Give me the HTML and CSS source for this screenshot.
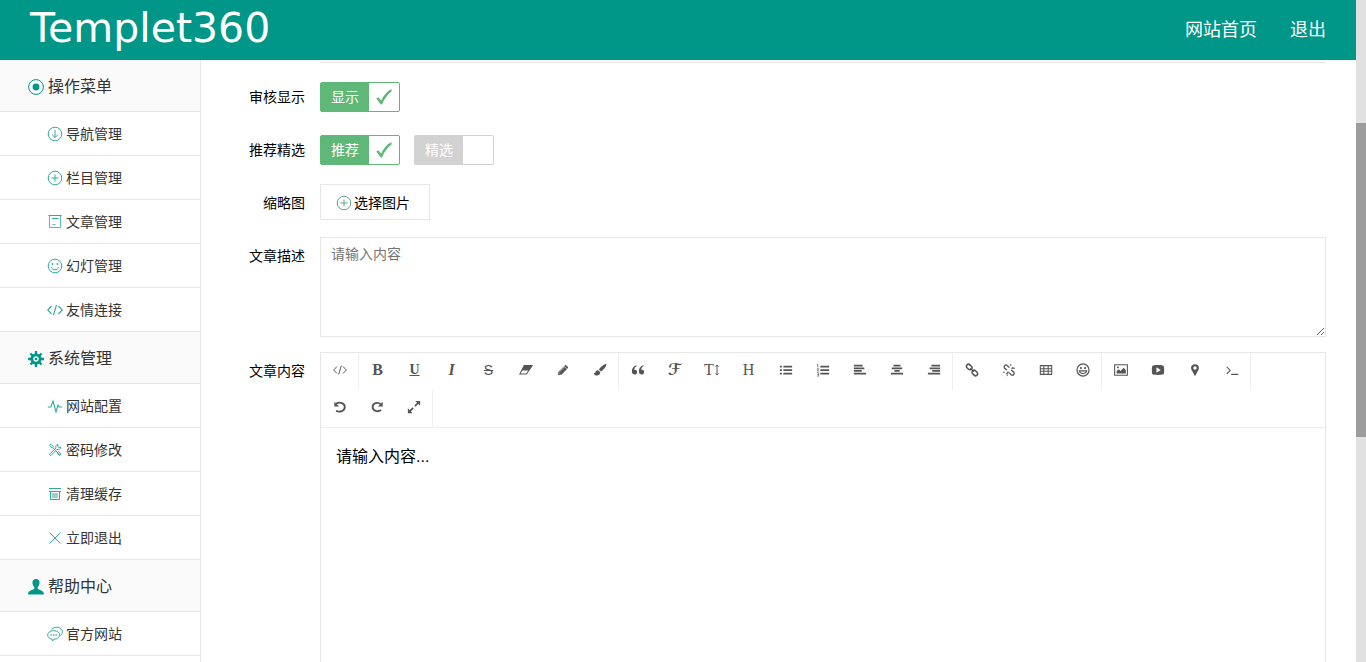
FILE: index.html
```html
<!DOCTYPE html>
<html lang="zh-CN">
<head>
<meta charset="utf-8">
<title>Templet360</title>
<link rel="stylesheet" href="styles.css">
</head>
<body>
<svg class="sprite" aria-hidden="true">
  <symbol id="i-target" viewBox="0 0 16 16"><circle cx="8" cy="8" r="7.4" fill="none" stroke="currentColor"/><circle cx="8" cy="8" r="3.4" fill="currentColor"/></symbol>
  <symbol id="i-down" viewBox="0 0 16 16"><g fill="none" stroke="currentColor"><circle cx="8" cy="8" r="6.8"/><path d="M8 4v7.5M5.2 8.8 8 11.6l2.8-2.8"/></g></symbol>
  <symbol id="i-plus" viewBox="0 0 16 16"><g fill="none" stroke="currentColor"><circle cx="8" cy="8" r="6.8"/><path d="M8 4.5v7M4.5 8h7"/></g></symbol>
  <symbol id="i-doc" viewBox="0 0 16 16"><g fill="none" stroke="currentColor"><path d="M2.500 2v11.500h11V2M5.500 10.500h3" stroke-width=".8"/><path d="M1.500 1.500h13M5 4.500h6.500" stroke-width="1.200"/></g></symbol>
  <symbol id="i-smile" viewBox="0 0 16 16"><g fill="none" stroke="currentColor"><circle cx="8" cy="8" r="6.8"/><path d="M4.300 9.200c1 3.400 6.400 3.400 7.400 0"/></g><circle cx="5.500" cy="6" r=".9" fill="currentColor"/><circle cx="10.500" cy="6" r=".9" fill="currentColor"/></symbol>
  <symbol id="i-code" viewBox="0 0 16 16"><path d="M4.500 4 .7 8l3.800 4M11.500 4l3.800 4-3.800 4M9.500 3l-3 10" fill="none" stroke="currentColor" stroke-width="1.100"/></symbol>
  <symbol id="i-gear" viewBox="0 0 16 16"><path d="M8 0v16M0 8h16M2.500 2.500l11 11M13.500 2.500l-11 11" stroke="currentColor" stroke-width="2.400"/><circle cx="8" cy="8" r="4" fill="none" stroke="currentColor" stroke-width="3"/><circle cx="8" cy="8" r="2.700" fill="#fafafa"/><circle cx="8" cy="8" r="1.300" fill="currentColor"/></symbol>
  <symbol id="i-pulse" viewBox="0 0 16 16"><path d="M.8 9h3L6 3l3 11 2-7 1.200 2h3" fill="none" stroke="currentColor" stroke-width="1.100"/></symbol>
  <symbol id="i-tools" viewBox="0 0 16 16"><g fill="none" stroke="currentColor"><path d="m2.500 3.200 1.400-1 2.600 2.600-1.200 1.400zM6.200 6l6.700 7.200M11 2.500c-2 .2-2.700 2-2 3.500L2.300 12.300l1.500 1.400L10 7.300c2 .8 3.800-.5 3.700-2.300l-2 .5-.8-.8zM10 11l1.500-1.700 2.400 2.600-1.500 1.700z"/></g></symbol>
  <symbol id="i-trash" viewBox="0 0 16 16"><path d="M2 2.500h12M2 5.500h12M3.500 6v7.500h9V6M6 7v5M8 7v5M10 7v5" fill="none" stroke="currentColor"/></symbol>
  <symbol id="i-close" viewBox="0 0 16 16"><path d="m2.500 2.500 11 11M13.500 2.500l-11 11" fill="none" stroke="currentColor"/></symbol>
  <symbol id="i-user" viewBox="0 0 16 16"><path d="M8 0C5.500 0 4.200 1.900 4.500 4.300c.2 2 1 3 1.800 3.900v1.600C5.500 11 0 11.200 0 15.500h16c0-4.300-5.500-4.500-6.300-5.700V8.200c.8-.9 1.600-1.900 1.800-3.900C11.800 1.900 10.500 0 8 0z" fill="currentColor"/></symbol>
  <symbol id="i-chat" viewBox="0 0 16 16"><g fill="none" stroke="currentColor"><path d="M5 13.200c-6-1-6-8.200 1.500-8.500 8.300.2 8 8.300.2 8.500L5.800 15z"/><path d="M4.500 3.500c2.700-4 11.800-2.500 10.800 3-.2 1.500-1 2.500-2 3"/></g><path d="M3.500 9h1.300M6 9h1.300M8.500 9h1.300" stroke="currentColor" stroke-width="1.300"/></symbol>
  <symbol id="i-check" viewBox="0 0 16 16"><path d="m.3 9.500 1.900-1.300 3 3.300C7.700 6.300 10.800 2.500 15.500 0v2.500c-4 3-7 7-9.500 13H4.800z" fill="currentColor"/></symbol>
  <symbol id="i-eraser" viewBox="0 0 16 16"><path d="M6 3h9l-6.500 9.500H1z" fill="none" stroke="currentColor" stroke-width="1.200"/><path d="M6 3h9l-3.700 5.600H2.800z" fill="currentColor"/></symbol>
  <symbol id="i-pencil" viewBox="0 0 16 16"><path d="m2 14 .8-4L10 2.800c.6-.6 1.200-.6 1.800 0l1.700 1.600c.5.500.5 1.200 0 1.700L6.200 13.300z" fill="currentColor"/><path d="m4 10 6-6M3.200 11.500l1.500 1.500M9.300 3.800l3.200 3.100" stroke="#fff" stroke-width=".7"/></symbol>
  <symbol id="i-brush" viewBox="0 0 16 16"><path d="M15 1.200c-1.200-1.200-7.200 4.100-8.300 6.300L9 9.700c2.500-1.200 7.500-7.200 6-8.500zM6 8.300c-2-.2-3 .8-3.200 2.300-.1 1-.8 1-1.800.7.300 4.200 7 4.200 7.300-.6z" fill="currentColor"/></symbol>
  <symbol id="i-quote" viewBox="0 0 16 16"><path d="M6.500 3.500 6 2.600C2.500 4 1 6.200 1 9.500c0 5 6 4.400 6 1 0-2-1.500-3-3.300-2.600.2-2 1-3.400 2.800-4.400zM14.500 3.500l-.5-.9C10.500 4 9 6.200 9 9.500c0 5 6 4.400 6 1 0-2-1.500-3-3.300-2.600.2-2 1-3.400 2.800-4.400z" fill="currentColor"/></symbol>
  <symbol id="i-size" viewBox="0 0 4 14"><path d="M2 2v10M.5 3.500 2 2l1.500 1.500M.5 10.500 2 12l1.500-1.500" stroke="currentColor" fill="none"/></symbol>
  <symbol id="i-ul" viewBox="0 0 16 16"><path d="M1 4h2.300M1 8h2.300M1 12h2.300M5 4h10M5 8h10M5 12h10" stroke="currentColor" stroke-width="2"/></symbol>
  <symbol id="i-ol" viewBox="0 0 16 16"><path d="M5 4h10M5 8h10M5 12h10" stroke="currentColor" stroke-width="2"/><path d="M1 2l1-.5V5M1 6.500h2L1.200 9H3.500M1 11h2v4H1M1.500 13H3" fill="none" stroke="currentColor" stroke-width=".8"/></symbol>
  <symbol id="i-left" viewBox="0 0 16 16"><path d="M1 3h10M1 6h12M1 9h9M1 12h14" stroke="currentColor" stroke-width="2"/></symbol>
  <symbol id="i-center" viewBox="0 0 16 16"><path d="M4 3h8M2 6h12M5 9h6M1 12h14" stroke="currentColor" stroke-width="2"/></symbol>
  <symbol id="i-right" viewBox="0 0 16 16"><path d="M5 3h10M3 6h12M6 9h9M1 12h14" stroke="currentColor" stroke-width="2"/></symbol>
  <symbol id="i-link" viewBox="0 0 16 16"><g fill="none" stroke="currentColor" stroke-width="1.700"><rect x="1.300" y="2.300" width="7" height="4.600" rx="2.300" transform="rotate(45 4.800 4.600)"/><rect x="7.700" y="9.100" width="7" height="4.600" rx="2.300" transform="rotate(45 11.200 11.400)"/><path d="m6 6 4 4"/></g></symbol>
  <symbol id="i-unlink" viewBox="0 0 16 16"><g fill="none" stroke="currentColor" stroke-width="1.500"><path d="M5.500 8 2.800 5.800C1.500 3.500 4 1.200 6 2.800l2.500 2.500M10.500 8l3 2.500c1.500 2.200-1 4.500-3 3L8 11"/><path d="M7.500 10 5 12.500M11 6.500 13 5"/><path d="M10 1v2.500M15 6h-2.500M1 10.500h2.500M6 15v-2" stroke-width="1"/></g></symbol>
  <symbol id="i-table" viewBox="0 0 16 16"><path d="M1.500 3h13v10h-13zM1.500 6.500h13M1.500 9.500h13M5.500 3v10M10.500 3v10" fill="none" stroke="currentColor" stroke-width="1.200"/></symbol>
  <symbol id="i-face" viewBox="0 0 16 16"><circle cx="8" cy="8" r="6.900" fill="none" stroke="currentColor" stroke-width="1.400"/><circle cx="5.700" cy="5.800" r="1.200" fill="currentColor"/><circle cx="10.300" cy="5.800" r="1.200" fill="currentColor"/><path d="M3.800 9h8.400c-.8 4-7.600 4-8.400 0z" fill="none" stroke="currentColor" stroke-width="1.200"/></symbol>
  <symbol id="i-image" viewBox="0 0 16 16"><path d="M.7 2h14.600v12H.7z" fill="none" stroke="currentColor" stroke-width="1.200"/><path d="M3 12V9l2.500-2 2 2L11 5.500 13.500 8v4z" fill="currentColor"/><circle cx="4.500" cy="5" r="1.100" fill="currentColor"/></symbol>
  <symbol id="i-video" viewBox="0 0 16 16"><path d="M2.500 2.800c3.500-.5 7.500-.5 11 0 1.300.3 1.500 1.500 1.500 5.200s-.2 4.900-1.500 5.200c-3.500.5-7.500.5-11 0C1.200 12.900 1 11.700 1 8s.2-4.900 1.500-5.200z" fill="currentColor"/><path d="m6.200 4.800 5 3.200-5 3.200z" fill="#fff"/></symbol>
  <symbol id="i-pin" viewBox="0 0 16 16"><path d="M8 1.500c-5 0-5.500 5-3 8L8 15l3-5.500c2.500-3 2-8-3-8z" fill="currentColor"/><circle cx="8" cy="5.700" r="1.900" fill="#fff"/></symbol>
  <symbol id="i-term" viewBox="0 0 16 16"><path d="m2 4.500 4 4-4 4M7 13h8" fill="none" stroke="currentColor" stroke-width="1.200"/></symbol>
  <symbol id="i-undo" viewBox="0 0 16 16"><path d="M3 4.500C8 1.500 13.500 3.500 13.500 8s-5.500 6.500-10 4.500" fill="none" stroke="currentColor" stroke-width="2.100"/><path d="M1.500 2v5.500H7z" fill="currentColor"/></symbol>
  <symbol id="i-redo" viewBox="0 0 16 16"><path d="M12.500 5C9 1.800 3 3.500 3 8s6 6.300 9.700 3.500" fill="none" stroke="currentColor" stroke-width="2.100"/><path d="M14.500 2v5.500H9z" fill="currentColor"/></symbol>
  <symbol id="i-full" viewBox="0 0 16 16"><path d="m9 7 4-4M7 9l-4 4" stroke="currentColor" stroke-width="1.800"/><path d="M9.500 1H15v5.500zM1 9.500V15h5.500z" fill="currentColor"/></symbol>
</svg>

<div class="app">
  <header class="header">
    <a class="logo" href="#">Templet360</a>
    <nav class="top-nav"><a href="#">网站首页</a><a href="#">退出</a></nav>
  </header>
  <div class="body">
    <aside class="sidebar">
      <h2 class="side-title"><svg class="icon"><use href="#i-target"/></svg>操作菜单</h2>
      <a class="side-item" href="#"><svg class="icon"><use href="#i-down"/></svg>导航管理</a>
      <a class="side-item" href="#"><svg class="icon"><use href="#i-plus"/></svg>栏目管理</a>
      <a class="side-item" href="#"><svg class="icon"><use href="#i-doc"/></svg>文章管理</a>
      <a class="side-item" href="#"><svg class="icon"><use href="#i-smile"/></svg>幻灯管理</a>
      <a class="side-item" href="#"><svg class="icon"><use href="#i-code"/></svg>友情连接</a>
      <h2 class="side-title"><svg class="icon"><use href="#i-gear"/></svg>系统管理</h2>
      <a class="side-item" href="#"><svg class="icon"><use href="#i-pulse"/></svg>网站配置</a>
      <a class="side-item" href="#"><svg class="icon"><use href="#i-tools"/></svg>密码修改</a>
      <a class="side-item" href="#"><svg class="icon"><use href="#i-trash"/></svg>清理缓存</a>
      <a class="side-item" href="#"><svg class="icon"><use href="#i-close"/></svg>立即退出</a>
      <h2 class="side-title"><svg class="icon"><use href="#i-user"/></svg>帮助中心</h2>
      <a class="side-item" href="#"><svg class="icon"><use href="#i-chat"/></svg>官方网站</a>
    </aside>
    <main class="content">
      <form class="form">
        <div class="field-end"></div>
        <div class="row">
          <span class="label">审核显示</span>
          <div class="field">
            <label class="switch"><input type="checkbox" checked><span class="switch-text">显示</span><span class="switch-box"><svg class="icon"><use href="#i-check"/></svg></span></label>
          </div>
        </div>
        <div class="row">
          <span class="label">推荐精选</span>
          <div class="field">
            <label class="switch"><input type="checkbox" checked><span class="switch-text">推荐</span><span class="switch-box"><svg class="icon"><use href="#i-check"/></svg></span></label>
            <label class="switch"><input type="checkbox"><span class="switch-text">精选</span><span class="switch-box"><svg class="icon"><use href="#i-check"/></svg></span></label>
          </div>
        </div>
        <div class="row">
          <span class="label">缩略图</span>
          <div class="field"><button class="upload" type="button"><svg class="icon"><use href="#i-plus"/></svg>选择图片</button></div>
        </div>
        <div class="row">
          <label class="label" for="desc">文章描述</label>
          <textarea class="textarea" id="desc" placeholder="请输入内容"></textarea>
        </div>
        <div class="row">
          <span class="label" id="content-label">文章内容</span>
          <div class="editor">
            <div class="toolbar">
              <div class="group">
                <button type="button" aria-label="源码"><svg class="icon"><use href="#i-code"/></svg></button>
              </div>
              <div class="group">
                <button type="button"><b>B</b></button>
                <button type="button"><u>U</u></button>
                <button type="button"><i>I</i></button>
                <button type="button"><s>S</s></button>
                <button type="button" aria-label="清除"><svg class="icon"><use href="#i-eraser"/></svg></button>
                <button type="button" aria-label="颜色"><svg class="icon"><use href="#i-pencil"/></svg></button>
                <button type="button" aria-label="背景"><svg class="icon"><use href="#i-brush"/></svg></button>
              </div>
              <div class="group">
                <button type="button" aria-label="引用"><svg class="icon"><use href="#i-quote"/></svg></button>
                <button type="button" class="script">ℱ</button>
                <button type="button">T<svg class="icon-size"><use href="#i-size"/></svg></button>
                <button type="button">H</button>
                <button type="button" aria-label="无序列表"><svg class="icon"><use href="#i-ul"/></svg></button>
                <button type="button" aria-label="有序列表"><svg class="icon"><use href="#i-ol"/></svg></button>
                <button type="button" aria-label="左对齐"><svg class="icon"><use href="#i-left"/></svg></button>
                <button type="button" aria-label="居中"><svg class="icon"><use href="#i-center"/></svg></button>
                <button type="button" aria-label="右对齐"><svg class="icon"><use href="#i-right"/></svg></button>
              </div>
              <div class="group">
                <button type="button" aria-label="链接"><svg class="icon"><use href="#i-link"/></svg></button>
                <button type="button" aria-label="取消链接"><svg class="icon"><use href="#i-unlink"/></svg></button>
                <button type="button" aria-label="表格"><svg class="icon"><use href="#i-table"/></svg></button>
                <button type="button" aria-label="表情"><svg class="icon"><use href="#i-face"/></svg></button>
              </div>
              <div class="group">
                <button type="button" aria-label="图片"><svg class="icon"><use href="#i-image"/></svg></button>
                <button type="button" aria-label="视频"><svg class="icon"><use href="#i-video"/></svg></button>
                <button type="button" aria-label="位置"><svg class="icon"><use href="#i-pin"/></svg></button>
                <button type="button" aria-label="代码"><svg class="icon"><use href="#i-term"/></svg></button>
              </div>
              <div class="group">
                <button type="button" aria-label="撤销"><svg class="icon"><use href="#i-undo"/></svg></button>
                <button type="button" aria-label="重做"><svg class="icon"><use href="#i-redo"/></svg></button>
                <button type="button" aria-label="全屏"><svg class="icon"><use href="#i-full"/></svg></button>
              </div>
            </div>
            <div class="editable" contenteditable="true" role="textbox" aria-labelledby="content-label">请输入内容...</div>
          </div>
        </div>
      </form>
    </main>
  </div>
</div>
<div class="scrollbar"><div class="thumb"></div></div>
</body>
</html>
```
FILE: styles.css
```css
* { box-sizing: border-box; }
body {
  margin: 0;
  height: 100vh;
  overflow: hidden;
  display: grid;
  grid-template-columns: minmax(0, 1fr) 10px;
  background: #fff;
  color: #000;
  font: 14px/20px "Liberation Sans", "Noto Sans CJK SC", sans-serif;
}
a { color: inherit; text-decoration: none; }
button, textarea { font: inherit; color: inherit; }
.sprite { display: none; }
.icon { width: 16px; height: 16px; flex: none; }

.app { display: flex; flex-direction: column; height: 100vh; }
.header {
  flex: none;
  height: 60px;
  padding: 0 30px;
  display: flex;
  align-items: center;
  justify-content: space-between;
  background: #009688;
  color: #fff;
}
.logo { font: 41px/56px "DejaVu Sans", sans-serif; height: 60px; }
.top-nav { display: flex; gap: 33px; font-size: 18px; }

.body { flex: 1; min-height: 0; display: flex; overflow: hidden; }
.sidebar { flex: none; width: 201px; border-right: 1px solid #e6e6e6; color: #333; }
.side-title, .side-item {
  display: flex;
  align-items: center;
  border-bottom: 1px solid #e6e6e6;
}
.side-title {
  margin: 0;
  height: 52px;
  padding: 2px 0 0 28px;
  gap: 4px;
  background: #fafafa;
  font-size: 16px;
  font-weight: 400;
}
.side-item { height: 44px; padding-left: 47px; gap: 3px; }
.sidebar .icon { color: #009688; }
.side-item .icon { opacity: .8; }

.content { flex: 1; min-width: 0; padding-right: 30px; }
.form { display: flex; flex-direction: column; gap: 15px; }
.field-end { height: 3px; margin-left: 119px; border-bottom: 1px solid #e6e6e6; }
.row { display: flex; min-height: 38px; }
.label { flex: none; width: 119px; padding: 9px 15px 9px 0; text-align: right; }
.field { display: flex; align-items: center; gap: 14px; }

.switch {
  display: flex;
  width: 80px;
  height: 30px;
  border: 1px solid #d2d2d2;
  border-radius: 2px;
  background: #d2d2d2;
  color: #fff;
  overflow: hidden;
  cursor: pointer;
}
.switch input { appearance: none; width: 0; height: 0; margin: 0; }
.switch-text { width: 48px; line-height: 28px; text-align: center; }
.switch-box { flex: 1; display: grid; place-items: center; background: #fff; }
.switch:has(:checked) { background: #5fb878; border-color: #5fb878; }
.switch :checked ~ .switch-box { color: #5fb878; }

.upload {
  display: flex;
  align-items: center;
  gap: 2px;
  height: 36px;
  align-self: flex-start;
  padding: 1px 19px 0 15px;
  border: 1px solid #e6e6e6;
  background: #fff;
}
.upload .icon { color: #5fa488; }

.textarea {
  display: block;
  flex: 1;
  height: 100px;
  padding: 6px 10px;
  border: 1px solid #e6e6e6;
  outline: 0;
  resize: vertical;
}
.textarea::placeholder { color: #757575; }

.editor { flex: 1; min-width: 0; min-height: 360px; border: 1px solid #e6e6e6; }
.toolbar { display: flex; flex-wrap: wrap; border-bottom: 1px solid #eee; }
.group { display: flex; border-right: 1px solid #eee; }
.group button {
  display: flex;
  align-items: center;
  justify-content: center;
  gap: 1px;
  width: 37px;
  height: 37px;
  padding: 0 0 3px;
  border: 0;
  background: none;
  color: #555;
  font: 16px/20px "Liberation Serif", serif;
}
.group .icon { width: 14px; height: 14px; }
.group i { font-weight: 700; }
.group u { font-weight: 700; font-size: 14px; }
.group s { font: 14px/20px "Liberation Sans", sans-serif; }
.group .script { font: 700 16px/20px "DejaVu Sans", sans-serif; }
.icon-size { width: 4px; height: 14px; }
.editable { padding: 17px 15px; font-size: 16px; line-height: 24px; outline: 0; }

.scrollbar { background: #e1e1e1; padding-top: 123px; }
.thumb { height: 314px; background: #9c9c9c; }
```
